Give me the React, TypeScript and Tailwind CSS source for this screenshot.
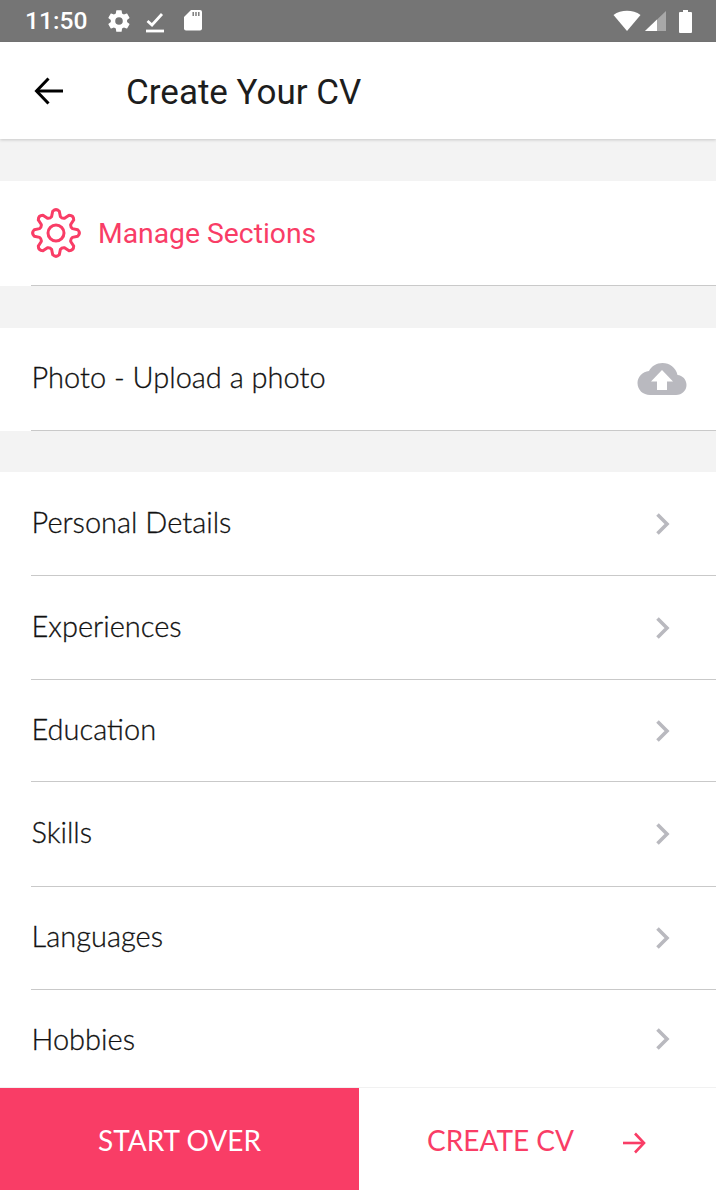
import React from "react";

const PINK = "#f93d66";

function gearPath() {
  const cx = 25, cy = 25, ro = 24, ri = 17, n = 8;
  let d = "";
  const p = (r: number, t: number) => `${(cx + r * Math.cos(t)).toFixed(2)} ${(cy + r * Math.sin(t)).toFixed(2)}`;
  for (let i = 0; i < n; i++) {
    const a = (i * 2 * Math.PI) / n - Math.PI / 2;
    const w1 = 0.26, w2 = 0.15;
    d += i === 0 ? `M${p(ri, a - w1)}` : ` Q${p(ri - 1.5, a - Math.PI / n)} ${p(ri, a - w1)}`;
    d += ` L${p(ro - 2, a - w2)}`;
    d += ` Q${p(ro + 1, a)} ${p(ro - 2, a + w2)}`;
    d += ` L${p(ri, a + w1)}`;
  }
  const a0 = -Math.PI / 2;
  d += ` Q${p(ri - 1.5, a0 - Math.PI / n)} ${p(ri, a0 - 0.26)}Z`;
  return d;
}

function Chevron() {
  return (
    <svg width="18" height="26" viewBox="0 0 18 26" className="mr-[44px]">
      <path d="M3.5 3.5 L13 13 L3.5 22.5" fill="none" stroke="#b9b9bf" strokeWidth="3.6" />
    </svg>
  );
}

function Row({ label, h, right, dy }: { label: string; h: string; right?: React.ReactNode; dy?: string }) {
  return (
    <div className={`flex items-center justify-between bg-white ${h}`}>
      <span className={`pl-[31.5px] text-[29px] text-[#111] font-['Lato',sans-serif] font-light [-webkit-text-stroke:0.3px_#111] ${dy ?? "mb-[4px]"}`}>{label}</span>
      {right ?? <Chevron />}
    </div>
  );
}

function Line() {
  return <div className="ml-[31px] h-px bg-[#c9c9c9]" />;
}

export default function App() {
  return (
    <div className="flex h-[1190px] w-[716px] flex-col overflow-hidden bg-[#f3f3f3] font-['Roboto',sans-serif]">
      <div className="flex h-[42px] items-center bg-[#757575] text-white">
        <span className="ml-[25px] text-[24.6px] font-medium leading-none">11:50</span>
        <svg className="ml-[19px]" width="26" height="26" viewBox="0 0 24 24" fill="#fff">
          <path d="M19.4 13c.04-.32.1-.66.1-1s-.06-.68-.1-1l2.1-1.65c.2-.15.25-.42.12-.64l-2-3.46c-.12-.22-.4-.3-.6-.22l-2.5 1c-.52-.4-1.08-.73-1.7-.98l-.37-2.65C14.4 2.18 14.2 2 13.95 2h-4c-.25 0-.46.18-.5.42l-.37 2.65c-.62.25-1.18.58-1.7.98l-2.5-1c-.22-.08-.48 0-.6.22l-2 3.46c-.13.22-.07.49.12.64L4.5 11c-.04.32-.1.66-.1 1s.06.68.1 1l-2.1 1.65c-.2.15-.25.42-.12.64l2 3.46c.12.22.4.3.6.22l2.5-1c.52.4 1.08.73 1.7.98l.37 2.65c.04.24.25.42.5.42h4c.25 0 .46-.18.5-.42l.37-2.65c.62-.25 1.18-.58 1.7-.98l2.5 1c.22.08.48 0 .6-.22l2-3.46c.13-.22.07-.49-.12-.64L19.4 13zM12 15.5A3.5 3.5 0 1 1 12 8.5a3.5 3.5 0 0 1 0 7z" />
        </svg>
        <svg className="ml-[13px] mb-[1px]" width="20" height="24" viewBox="0 0 20 24" fill="none" stroke="#fff" strokeWidth="2.8">
          <path d="M2.5 12 L7 16 L17 5" />
          <path d="M1 22 H19" />
        </svg>
        <svg className="ml-[18px] mb-[2px]" width="20" height="24" viewBox="0 0 20 24" fill="#fff">
          <path d="M8 2 H17 a2 2 0 0 1 2 2 V20.5 a2 2 0 0 1 -2 2 H3 a2 2 0 0 1 -2 -2 V9 Z" />
          <path d="M9.5 4h1.4v4H9.5zM12.3 4h1.4v4h-1.4zM15.1 4h1.4v4h-1.4z" fill="#757575" />
        </svg>
        <div className="flex-1" />
        <svg width="28" height="22" viewBox="0 0 28 22" fill="#fff" className="mr-[4px]">
          <path d="M14 21 L0.5 5 C8 -0.6 20 -0.6 27.5 5 Z" />
        </svg>
        <svg width="21" height="21" viewBox="0 0 21 21" className="mr-[13px]">
          <path d="M0 20 L21 0 V20 Z" fill="#a8a8a8" />
          <path d="M0 20 L12 8.5 V20 Z" fill="#fff" />
        </svg>
        <svg width="13" height="23" viewBox="0 0 13 23" fill="#fff" className="mr-[24px]">
          <path d="M4 0 H9 V2 H12 a1 1 0 0 1 1 1 V22 a1 1 0 0 1 -1 1 H1 a1 1 0 0 1 -1 -1 V3 a1 1 0 0 1 1 -1 H4 Z" />
        </svg>
      </div>

      <div className="z-10 flex h-[97px] items-center bg-white shadow-[0_1px_3px_rgba(0,0,0,0.18)]">
        <svg className="ml-[34px]" width="30" height="28" viewBox="0 0 30 28" fill="none" stroke="#000" strokeWidth="3">
          <path d="M14.5 1.5 L2.5 14 L14.5 26.5" />
          <path d="M2.5 14 H29" />
        </svg>
        <span className="ml-[62px] mt-[4px] text-[35px] leading-none text-[#1d1d1d]">Create Your CV</span>
      </div>

      <div className="h-[42px] shrink-0" />

      <div className="flex h-[104px] items-center bg-white">
        <svg className="ml-[31px]" width="50" height="50" viewBox="0 0 50 50" fill="none" stroke={PINK} strokeWidth="3">
          <path d={gearPath()} strokeLinejoin="round" />
          <circle cx="25" cy="25" r="8" />
        </svg>
        <span className="ml-[17px] mt-[2px] text-[28.3px] leading-none" style={{ color: PINK }}>Manage Sections</span>
      </div>
      <div className="bg-white"><Line /></div>

      <div className="h-[42px] shrink-0" />

      <Row
        label="Photo - Upload a photo"
        h="h-[102px]"
        right={
          <svg className="mr-[29px]" width="50" height="34" viewBox="0 0 50 34">
            <path d="M40.5 13 C39 5.5 32.5 1 25.5 1 C19.5 1 14.5 4.2 12 9 C5.5 9.7 0.5 15 0.5 21 C0.5 28 6 33 13 33 H39 C45 33 49.5 28.5 49.5 23 C49.5 17.5 45.5 13.4 40.5 13 Z" fill="#b9b9bf" />
            <path d="M25 8 L36 19.5 H30 V28 H20 V19.5 H14 Z" fill="#fff" />
          </svg>
        }
      />
      <div className="bg-white"><Line /></div>

      <div className="h-[41px] shrink-0" />

      <Row label="Personal Details" h="h-[103px]" />
      <div className="bg-white"><Line /></div>
      <Row label="Experiences" h="h-[103px]" />
      <div className="bg-white"><Line /></div>
      <Row label="Education" h="h-[101px]" />
      <div className="bg-white"><Line /></div>
      <Row label="Skills" h="h-[104px]" />
      <div className="bg-white"><Line /></div>
      <Row label="Languages" h="h-[102px]" />
      <div className="bg-white"><Line /></div>
      <Row label="Hobbies" h="h-[97px]" dy="mb-[-1px]" />
      <div className="h-px shrink-0 bg-[#f1f1f1]" />

      <div className="flex h-[102px] shrink-0 bg-white font-['Lato',sans-serif]">
        <div className="flex w-[359px] items-center justify-center pt-[2px] text-[28px] text-white" style={{ background: PINK }}>
          START OVER
        </div>
        <div className="flex flex-1 items-center text-[28px]" style={{ color: PINK }}>
          <span className="ml-[68px] mt-[2px]">CREATE CV</span>
          <svg className="ml-[48px] mt-[8px]" width="24" height="22" viewBox="0 0 24 22" fill="none" stroke={PINK} strokeWidth="2.6">
            <path d="M13 1.5 L22 11 L13 20.5" />
            <path d="M1 11 H22" />
          </svg>
        </div>
      </div>
    </div>
  );
}
